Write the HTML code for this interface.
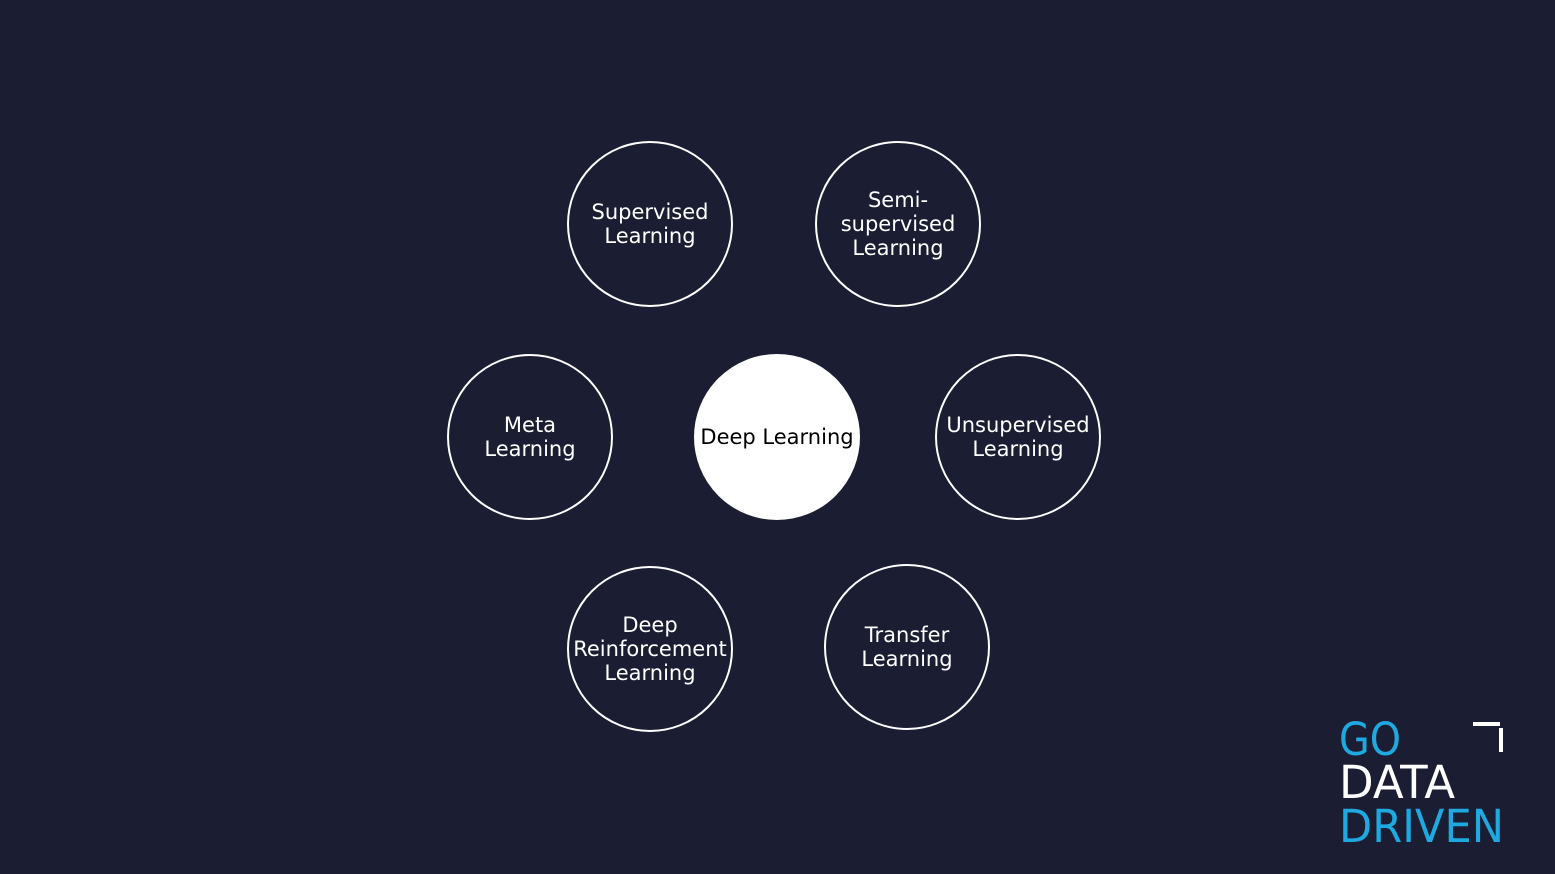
<!DOCTYPE html>
<html><head><meta charset="utf-8"><style>
html,body{margin:0;padding:0;background:#1b1d32;}
body{width:1555px;height:874px;position:relative;overflow:hidden;font-family:"DejaVu Sans","Liberation Sans",sans-serif;}
.c{position:absolute;width:162px;height:162px;border:2px solid #fff;border-radius:50%;box-sizing:content-box;display:flex;align-items:center;justify-content:center;text-align:center;color:#fff;font-size:21px;line-height:24px;}
.w{background:#fff;color:#000;}
</style></head><body>
<div class="c" style="left:567px;top:141px">Supervised<br>Learning</div>
<div class="c" style="left:815px;top:141px">Semi-<br>supervised<br>Learning</div>
<div class="c" style="left:447px;top:354px">Meta<br>Learning</div>
<div class="c w" style="left:694px;top:354px">Deep Learning</div>
<div class="c" style="left:935px;top:354px">Unsupervised<br>Learning</div>
<div class="c" style="left:567px;top:566px">Deep<br>Reinforcement<br>Learning</div>
<div class="c" style="left:824px;top:564px">Transfer<br>Learning</div>
<svg style="position:absolute;left:0;top:0" width="1555" height="874">
<g font-family="DejaVu Sans, sans-serif" font-size="45">
<text x="1339" y="755" fill="#1ea9e0" textLength="62" lengthAdjust="spacingAndGlyphs">GO</text>
<text x="1339" y="798" fill="#fff" textLength="116" lengthAdjust="spacingAndGlyphs">DATA</text>
<text x="1339" y="842" fill="#1ea9e0" textLength="165" lengthAdjust="spacingAndGlyphs">DRIVEN</text>
</g>
<path d="M1473 724H1500" stroke="#fff" stroke-width="4"/>
<path d="M1501 728V752" stroke="#fff" stroke-width="4"/>
</svg>
</body></html>
